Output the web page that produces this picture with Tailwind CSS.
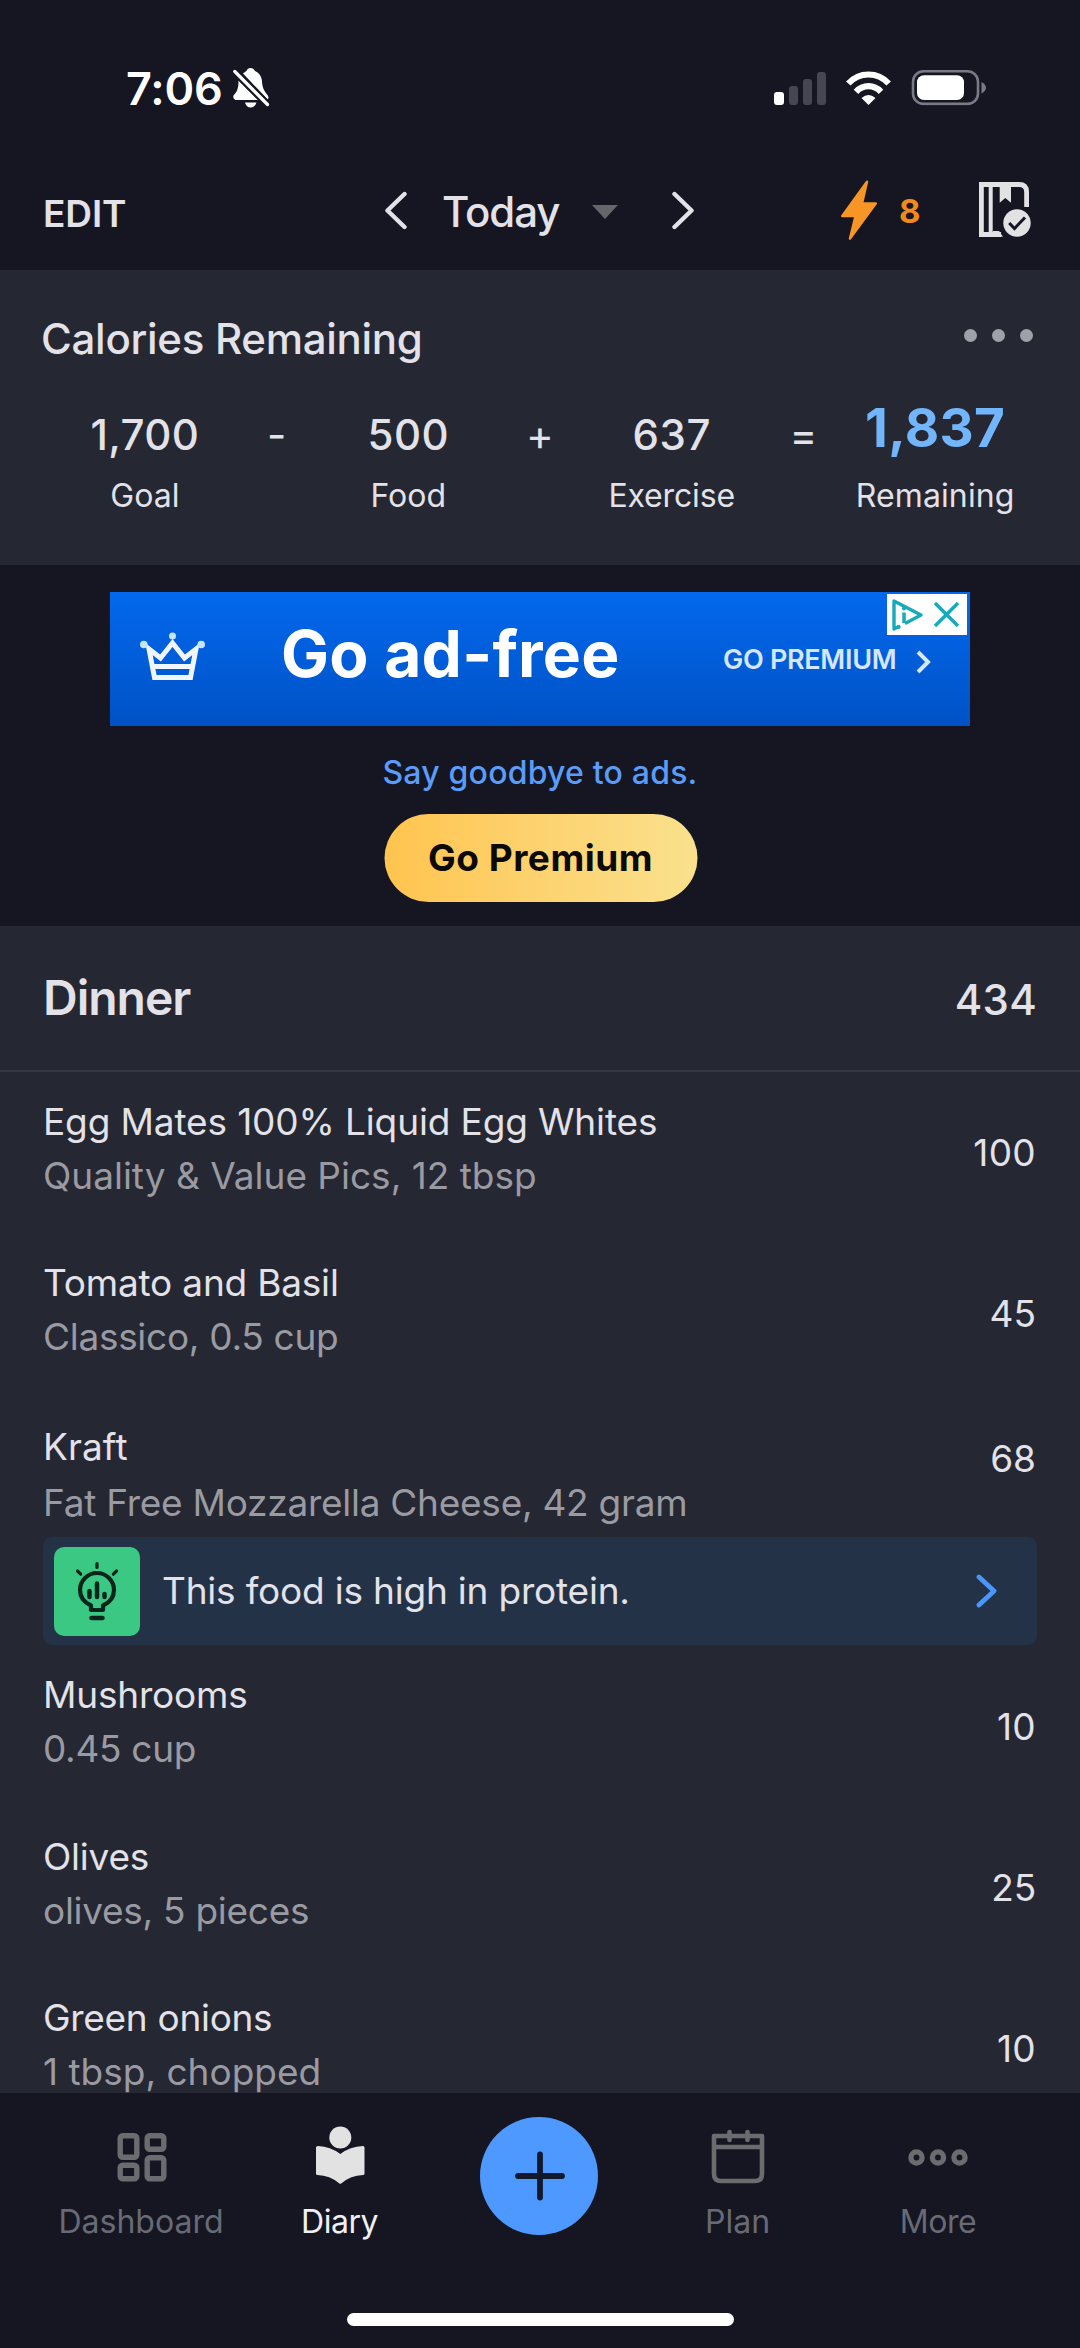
<!DOCTYPE html>
<html lang="en">
<head>
<meta charset="utf-8">
<title>Diary</title>
<script src="https://cdn.jsdelivr.net/npm/@tailwindcss/browser@4"></script>
</head>
<body class="bg-[#151622]">
<div class="flex h-[2348px] w-[1080px] flex-col overflow-hidden bg-[#151622] font-[Inter,sans-serif] text-[#e2e2e8]">

  <!-- Status bar -->
  <div class="flex h-[156px] shrink-0 items-center pt-[20px] text-white">
    <span class="ml-[126px] w-[107px] text-[45px] leading-none font-semibold tracking-[-0.15px]">7:06</span>
    <svg class="h-[40px] w-[37px]" viewBox="0 0 37 40" fill="currentColor">
      <path d="M10 5.5Q12 3.5 13.5 3Q14.5 0 17.500 0Q20.500 0 22 3Q28 5.500 29 13C29.300 20 31 22.500 34.500 27Q36.500 30 34.500 31.300Z"/>
      <path d="M5.500 12.500L25 32H2.500Q-.5 31 .5 27.500C3.500 24 5.500 22 5.500 12.500Z"/>
      <path d="M12 34.500H23.500Q22 39.500 17.700 39.500Q13.500 39.500 12 34.500Z"/>
      <path d="M1.500 3.500L35 37" stroke="#151622" stroke-width="7"/>
      <path d="M1.800 3.500L34.500 36.500" stroke="currentColor" stroke-width="3.200" stroke-linecap="round"/>
    </svg>
    <div class="ml-[504px] flex h-[33px] items-end gap-[4.500px]">
      <i class="h-[13px] w-[10px] rounded-[3px] bg-white"></i>
      <i class="h-[19px] w-[9.500px] rounded-[3px] bg-[#444653]"></i>
      <i class="h-[26px] w-[9.500px] rounded-[3px] bg-[#444653]"></i>
      <i class="h-[33px] w-[9.500px] rounded-[3px] bg-[#444653]"></i>
    </div>
    <svg class="ml-[20px] h-[34px] w-[45px]" viewBox="0 0 45 34" fill="none" stroke="currentColor" stroke-width="6.200">
      <path d="M2.300 12.500C13.500 .5 31.500 .5 42.700 12.500"/>
      <path d="M10 20.800C17 13.300 28 13.300 35 20.800"/>
      <path d="M15.500 27Q22.500 21 29.500 27L22.500 34Z" fill="currentColor" stroke="none"/>
    </svg>
    <svg class="ml-[20px] h-[36px] w-[75px] -translate-y-[0.500px]" viewBox="0 0 75 36">
      <rect x="2" y="1.800" width="65" height="32.600" rx="10.500" fill="none" stroke="#797a85" stroke-width="2.600"/>
      <rect x="6" y="5.700" width="47" height="24.800" rx="7" fill="#fff"/>
      <path d="M70.500 12.500Q75 15 75 18.200Q75 21.500 70.500 24Z" fill="#797a85"/>
    </svg>
  </div>

  <!-- Date header -->
  <header class="flex h-[114px] shrink-0 items-center">
    <span class="ml-[43px] w-[342px] text-[37px] leading-none font-semibold tracking-[-0.100px]">EDIT</span>
    <svg class="h-[40px] w-[22px] -translate-y-[2.500px]" viewBox="0 0 22 40" fill="none" stroke="currentColor" stroke-width="4.400" stroke-linecap="round" stroke-linejoin="round"><path d="M19.500 3.500L2.500 20L19.500 36.500"/></svg>
    <span class="ml-[35px] w-[150px] text-[42px] leading-none font-medium tracking-[-1.100px] -translate-y-[1.500px]">Today</span>
    <svg class="h-[14px] w-[26px] -translate-y-[1px]" viewBox="0 0 26 14" fill="#66666a"><path d="M0 0H26L13 14Z"/></svg>
    <svg class="ml-[54px] h-[40px] w-[22px] -translate-y-[2.500px]" viewBox="0 0 22 40" fill="none" stroke="currentColor" stroke-width="4.400" stroke-linecap="round" stroke-linejoin="round"><path d="M2.500 3.500L19.500 20L2.500 36.500"/></svg>
    <svg class="ml-[147px] h-[60px] w-[36px] -translate-y-[3px]" viewBox="0 0 36 60" fill="#f79626" stroke="#f79626" stroke-width="2.500" stroke-linejoin="round"><path d="M26 1.800L1.300 36H14.500L9 58.500L34.700 23.500H21Z"/></svg>
    <span class="ml-[22px] w-[80px] text-[33px] leading-none font-bold text-[#f08a1d] -translate-y-[2px]">8</span>
    <svg class="h-[56px] w-[53px] -translate-y-[3px]" viewBox="0 0 53 56" fill="none" stroke="#e2e2e4">
      <path d="M22 52.500H2.400V2.500H40Q47.600 2.500 47.600 10V25" stroke-width="4.800"/>
      <path d="M11.700 2V52" stroke-width="4"/>
      <path d="M14 49H20L24 54.800H14Z" fill="#e2e2e4" stroke="none"/>
      <path d="M20.700 2H32V20.800L26.300 16L20.700 20.800Z" fill="#e2e2e4" stroke="none"/>
      <circle cx="38" cy="41" r="13.700" fill="#e2e2e4" stroke="none"/>
      <path d="M30.200 41L35.500 46.500L46 35.500" stroke="#151622" stroke-width="3"/>
    </svg>
  </header>

  <!-- Calories card -->
  <section class="h-[295px] shrink-0 bg-[#252733] pt-[40px]">
    <div class="flex h-[57px] items-center justify-between pr-[47px] pl-[41px]">
      <h1 class="text-[42px] leading-none font-medium tracking-[-0.280px]">Calories Remaining</h1>
      <div class="mb-[6px] flex gap-[15px]">
        <i class="size-[13px] rounded-full bg-[#a0a1a8]"></i>
        <i class="size-[13px] rounded-full bg-[#a0a1a8]"></i>
        <i class="size-[13px] rounded-full bg-[#a0a1a8]"></i>
      </div>
    </div>
    <div class="mx-[79px] mt-[43px] grid grid-cols-7 text-[32px] whitespace-nowrap">
      <div class="flex flex-col items-center"><b class="text-[42px] leading-[50px] font-medium tracking-[0.300px]">1,700</b><span class="mt-[14px] leading-[44px]">Goal</span></div>
      <div class="text-center text-[42px] leading-[50px]">-</div>
      <div class="flex flex-col items-center"><b class="text-[42px] leading-[50px] font-medium tracking-[0.500px]">500</b><span class="mt-[14px] leading-[44px]">Food</span></div>
      <div class="text-center text-[42px] leading-[50px]">+</div>
      <div class="flex flex-col items-center"><b class="text-[42px] leading-[50px] font-medium tracking-[0.600px]">637</b><span class="mt-[14px] leading-[44px] tracking-[-0.150px]">Exercise</span></div>
      <div class="text-center text-[42px] leading-[50px]">=</div>
      <div class="flex flex-col items-center"><b class="-mt-[7px] text-[53px] leading-[50px] font-bold tracking-[0.300px] text-[#73b5fb]">1,837</b><span class="mt-[21px] leading-[44px] tracking-[0.110px]">Remaining</span></div>
    </div>
  </section>

  <!-- Advertisement -->
  <section class="flex h-[361px] shrink-0 flex-col items-center pt-[27px]">
    <div class="relative flex h-[134px] w-[860px] items-center bg-linear-to-b from-[#0368ee] to-[#0052c4] text-white">
      <svg class="ml-[29px] h-[52px] w-[67px] -translate-y-[3px]" viewBox="0 0 67 52" fill="none" stroke="#f0f6ff" stroke-width="5">
        <path d="M10 19L21.500 28L33.500 13L45.500 28L57 19L51.500 47.500H15.500Z"/>
        <path d="M13 36.500H54"/>
        <g fill="#c4e4ff" stroke="none"><circle cx="33.500" cy="6" r="3.500"/><circle cx="4.800" cy="14.500" r="3.800"/><circle cx="62.200" cy="14.500" r="3.800"/></g>
      </svg>
      <span class="ml-[75px] w-[442px] text-[64px] leading-none font-bold tracking-[0.250px] -translate-y-[5px]">Go ad-free</span>
      <span class="w-[176px] text-[27px] leading-none font-semibold tracking-[-0.300px] whitespace-nowrap text-[#d5e6ff]">GO PREMIUM</span>
      <svg class="ml-[17px] h-[24px] w-[15px] translate-y-[3px]" viewBox="0 0 15 24" fill="none" stroke="#d5e6ff" stroke-width="4"><path d="M2 2L12 12L2 22"/></svg>
      <div class="absolute top-[2px] right-[3px] flex h-[41px] w-[80px] items-center bg-white">
        <svg class="ml-[5px] h-[32px] w-[31px]" viewBox="0 0 31 32" fill="none" stroke="#19a9bd" stroke-width="3.400" stroke-linejoin="round">
          <path d="M8 27L2 30V2L29 16L13 24.500"/><path d="M12 13.500V24" stroke-width="3.500"/><circle cx="12" cy="9.500" r="2" fill="#19a9bd" stroke="none"/><circle cx="6.500" cy="28" r="2" fill="#19a9bd" stroke="none"/>
        </svg>
        <svg class="ml-[11px] h-[25px] w-[25px]" viewBox="0 0 25 25" stroke="#19a9bd" stroke-width="3.400"><path d="M1 1L24 24M24 1L1 24"/></svg>
      </div>
    </div>
    <p class="mt-[25px] text-[32px] leading-[44px] font-medium tracking-[0.200px] text-[#5a9cf8]">Say goodbye to ads.</p>
    <button class="mt-[19px] h-[88px] w-[313px] translate-x-[0.500px] rounded-[44px] bg-linear-to-r from-[#ffc44d] to-[#fae18d] pb-[2px] text-[37px] leading-none font-bold tracking-[0.500px] text-[#0c0a08]">Go Premium</button>
  </section>

  <!-- Dinner -->
  <section class="h-[1167px] shrink-0 overflow-hidden bg-[#252733]">
    <div class="flex h-[146px] items-center justify-between border-b-2 border-[#343642] pr-[43px] pl-[43px]">
      <h2 class="text-[48px] leading-none font-semibold tracking-[-1px]">Dinner</h2>
      <span class="translate-y-[1.500px] text-[42px] leading-none font-medium tracking-[0.300px]">434</span>
    </div>
    <div class="text-[37px] tracking-[-0.200px]">
      <div class="flex h-[161px] items-center justify-between pr-[44px] pl-[43px]">
        <div class="-mt-[9px]"><p class="leading-[54px] tracking-[-0.130px]">Egg Mates 100% Liquid Egg Whites</p><p class="leading-[53px] tracking-[0px] text-[#999aa2]">Quality &amp; Value Pics, 12 tbsp</p></div>
        <span class="tracking-[0.300px]">100</span>
      </div>
      <div class="flex h-[161px] items-center justify-between pr-[44px] pl-[43px]">
        <div class="-mt-[9px]"><p class="leading-[54px]">Tomato and Basil</p><p class="leading-[53px] tracking-[-0.290px] text-[#999aa2]">Classico, 0.5 cup</p></div>
        <span class="tracking-[0px]">45</span>
      </div>
      <div class="flex h-[143px] justify-between pt-[25px] pr-[44px] pl-[43px]">
        <div><p class="leading-[55px] tracking-[0.100px]">Kraft</p><p class="leading-[57px] tracking-[-0.260px] text-[#999aa2]">Fat Free Mozzarella Cheese, 42 gram</p></div>
        <span class="mt-[12px] leading-[55px] tracking-[0px]">68</span>
      </div>
      <div class="mx-[43px] mb-px flex h-[108px] items-center rounded-[9px] bg-[#243248]">
        <div class="ml-[11px] flex h-[89px] w-[86px] items-center justify-center rounded-[10px] bg-[#3bc883]">
          <svg class="h-[60px] w-[44px]" viewBox="0 0 44 60" fill="none" stroke="#06261c" stroke-width="4.200" stroke-linecap="round" stroke-linejoin="round">
            <path d="M22 2.500V6.500M2.500 10L5.700 13.200M41.500 10L38.300 13.200" stroke-width="3.200"/>
            <path d="M16 49V44.500Q5 39.500 5 29A17 17 0 0 1 39 29Q39 39.500 28 44.500V49Z"/>
            <path d="M22 22.500V36M14.500 30V36M29.500 33V36" stroke-width="4.500"/>
            <path d="M16.500 57H27.500" stroke-width="4.600"/>
          </svg>
        </div>
        <span class="ml-[22px] flex-1">This food is high in protein.</span>
        <svg class="mr-[40px] h-[34px] w-[21px]" viewBox="0 0 21 34" fill="none" stroke="#4b96fc" stroke-width="4.800" stroke-linecap="round" stroke-linejoin="round"><path d="M3 3L18 17L3 31"/></svg>
      </div>
      <div class="flex h-[161px] items-center justify-between pr-[44px] pl-[43px]">
        <div class="-mt-[10px]"><p class="leading-[54px]">Mushrooms</p><p class="leading-[53px] tracking-[-0.300px] text-[#999aa2]">0.45 cup</p></div>
        <span class="tracking-[0.300px]">10</span>
      </div>
      <div class="flex h-[161px] items-center justify-between pr-[44px] pl-[43px]">
        <div class="-mt-[9px]"><p class="leading-[54px]">Olives</p><p class="leading-[53px] tracking-[-0.280px] text-[#999aa2]">olives, 5 pieces</p></div>
        <span>25</span>
      </div>
      <div class="flex h-[161px] items-center justify-between pr-[44px] pl-[43px]">
        <div class="-mt-[9px]"><p class="leading-[54px] tracking-[-0.300px]">Green onions</p><p class="leading-[53px] tracking-[0px] text-[#999aa2]">1 tbsp, chopped</p></div>
        <span class="tracking-[0.300px]">10</span>
      </div>
    </div>
  </section>

  <!-- Tab bar -->
  <nav class="flex h-[220px] shrink-0 items-start pl-[42px] text-[32px] leading-[44px] text-[#686a74]">
    <div class="flex w-[198px] flex-col items-center pt-[33px]">
      <svg class="h-[62px] w-[60px] translate-x-px" viewBox="0 0 60 62" fill="none" stroke="#6b6b70" stroke-width="5.400">
        <rect x="8.200" y="9.700" width="16.600" height="21.600" rx="2.500"/><rect x="35.200" y="9.700" width="16.600" height="13.600" rx="2.500"/>
        <rect x="8.200" y="39.200" width="16.600" height="13.600" rx="2.500"/><rect x="35.200" y="31.700" width="16.600" height="21.100" rx="2.500"/>
      </svg>
      <span class="mt-[12px]">Dashboard</span>
    </div>
    <div class="flex w-[199px] flex-col items-center pt-[33px] text-[#f0f0f4]">
      <svg class="h-[62px] w-[60px] translate-x-[0.500px]" viewBox="0 0 60 62" fill="#e2e2e3">
        <circle cx="29.800" cy="11.500" r="11"/>
        <path d="M7.500 20Q20 20.500 29.800 28Q39.500 20.500 52.500 20Q54 20 54 21.500V47.500Q54 49 52.500 49Q40 49.500 31 57.300Q29.800 58.300 28.600 57.300Q19.500 49.500 7 49Q5.500 49 5.500 47.500V21.500Q5.500 20 7.500 20Z"/>
      </svg>
      <span class="mt-[12px] tracking-[-0.500px]">Diary</span>
    </div>
    <div class="flex w-[199px] flex-col items-center pt-[24px]">
      <div class="flex size-[118px] items-center justify-center rounded-full bg-[#4e99ff]">
        <svg class="size-[52px] translate-x-px" viewBox="0 0 52 52" stroke="#111a2c" stroke-width="5.800" stroke-linecap="round"><path d="M26 4.500V47.500M4 26H48"/></svg>
      </div>
    </div>
    <div class="flex w-[199px] flex-col items-center pt-[33px]">
      <svg class="h-[62px] w-[60px]" viewBox="0 0 60 62" fill="none" stroke="#6b6b70" stroke-width="4.600" stroke-linejoin="round">
        <path d="M6 10H54V48Q54 55 47 55H13Q6 55 6 48ZM6 21H54"/><path d="M21.500 6V14M39.500 6V14" stroke-linecap="round"/>
      </svg>
      <span class="mt-[12px]">Plan</span>
    </div>
    <div class="flex w-[202px] flex-col items-center pt-[33px]">
      <svg class="h-[62px] w-[60px]" viewBox="0 0 60 62" fill="none" stroke="#6b6b70" stroke-width="5.300">
        <circle cx="8.500" cy="31.500" r="5.600"/><circle cx="30" cy="31.500" r="5.600"/><circle cx="51.500" cy="31.500" r="5.600"/>
      </svg>
      <span class="mt-[12px] tracking-[-0.500px]">More</span>
    </div>
  </nav>
  <div class="mx-auto h-[13px] w-[387px] shrink-0 rounded-full bg-white"></div>
</div>
</body>
</html>
